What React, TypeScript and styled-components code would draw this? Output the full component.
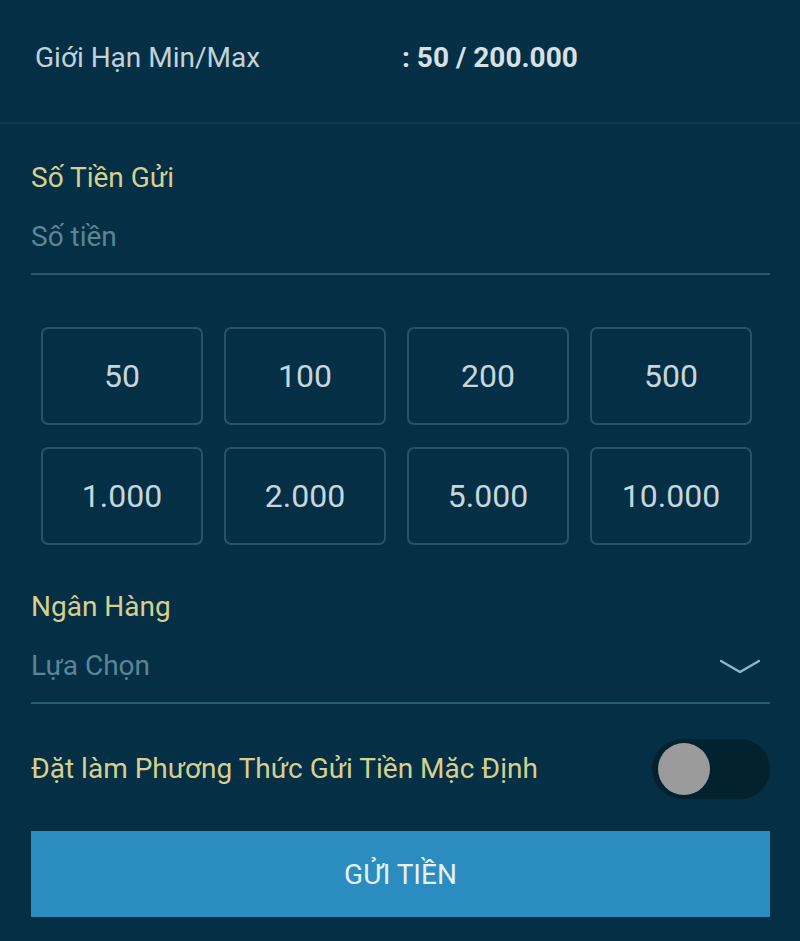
import React, { useState } from 'react'
import styled, { createGlobalStyle } from 'styled-components'

const GlobalStyle = createGlobalStyle`
    html, body {
        margin: 0;
        padding: 0;
        background: #052f45;
    }
    body {
        font-family: Roboto, "Noto Sans", "Liberation Sans", sans-serif;
    }
`

const Page = styled.div`
    width: 800px;
    height: 941px;
    background: #052f45;
    display: flex;
    flex-direction: column;
    overflow: hidden;
`

const LimitRow = styled.div`
    height: 124px;
    display: flex;
    align-items: center;
    padding: 0 0 8px 35px;
    box-sizing: border-box;
    border-bottom: 2px solid #0b394f;
    font-size: 28px;
    color: #c3d1d8;
`

const LimitLabel = styled.span`
    width: 367px;
`

const LimitValue = styled.span`
    font-weight: 700;
    color: #d6e0e5;
`

const Form = styled.div`
    display: flex;
    flex-direction: column;
    padding: 0 30px 0 31px;
`

const Label = styled.div<{ $top: number }>`
    margin-top: ${(p) => p.$top}px;
    font-size: 28px;
    line-height: 34px;
    color: #d8cf8f;
`

const InputRow = styled.div`
    display: flex;
    align-items: center;
    justify-content: space-between;
    box-sizing: border-box;
    height: 80px;
    padding-top: 25px;
    align-items: flex-start;
    border-bottom: 2px solid #2a5a71;
`

const Placeholder = styled.span`
    font-size: 28px;
    line-height: 34px;
    color: #5b8597;
`

const Chevron = styled.svg`
    width: 40px;
    height: 16px;
    margin: 9px 10px 0 0;
`

const AmountGrid = styled.div`
    display: grid;
    grid-template-columns: repeat(4, 162px);
    grid-auto-rows: 98px;
    column-gap: 21px;
    row-gap: 22px;
    margin: 52px 0 0 10px;
`

const AmountButton = styled.button`
    border: 2px solid #2a5365;
    border-radius: 7px;
    background: transparent;
    color: #c6d6de;
    font-family: inherit;
    font-size: 32px;
    padding: 0;
    cursor: pointer;
`

const ToggleRow = styled.div`
    display: flex;
    align-items: center;
    justify-content: space-between;
    margin-top: 36px;
    height: 58px;
`

const ToggleText = styled.span`
    font-size: 28px;
    color: #d8cf8f;
    margin-top: -2px;
`

const Track = styled.button<{ $on: boolean }>`
    width: 118px;
    height: 60px;
    border-radius: 30px;
    border: none;
    padding: 0 0 0 6px;
    background: ${(p) => (p.$on ? '#1f6e96' : '#03222f')};
    display: flex;
    align-items: center;
    justify-content: ${(p) => (p.$on ? 'flex-end' : 'flex-start')};
    cursor: pointer;
`

const Knob = styled.span`
    width: 52px;
    height: 52px;
    border-radius: 50%;
    background: #9b9b9b;
`

const SubmitButton = styled.button`
    margin-top: 33px;
    height: 86px;
    border: none;
    background: #2b8dbf;
    color: #e6f1f6;
    font-family: inherit;
    font-size: 28px;
    cursor: pointer;
`

const amounts = ['50', '100', '200', '500', '1.000', '2.000', '5.000', '10.000']

const App = () => {
    const [isDefault, setIsDefault] = useState(false)

    return (
        <Page>
            <GlobalStyle />
            <LimitRow>
                <LimitLabel>Giới Hạn Min/Max</LimitLabel>
                <LimitValue>: 50 / 200.000</LimitValue>
            </LimitRow>
            <Form>
                <Label $top={37}>Số Tiền Gửi</Label>
                <InputRow>
                    <Placeholder>Số tiền</Placeholder>
                </InputRow>
                <AmountGrid>
                    {amounts.map((a) => (
                        <AmountButton key={a}>{a}</AmountButton>
                    ))}
                </AmountGrid>
                <Label $top={45}>Ngân Hàng</Label>
                <InputRow>
                    <Placeholder>Lựa Chọn</Placeholder>
                    <Chevron viewBox="0 0 40 16" fill="none">
                        <path d="M1 3 L20 14 L39 3" stroke="#8fb6c8" strokeWidth="2.5" strokeLinecap="round" strokeLinejoin="round" />
                    </Chevron>
                </InputRow>
                <ToggleRow>
                    <ToggleText>Đặt làm Phương Thức Gửi Tiền Mặc Định</ToggleText>
                    <Track $on={isDefault} onClick={() => setIsDefault(!isDefault)}>
                        <Knob />
                    </Track>
                </ToggleRow>
                <SubmitButton>GỬI TIỀN</SubmitButton>
            </Form>
        </Page>
    )
}

export default App
